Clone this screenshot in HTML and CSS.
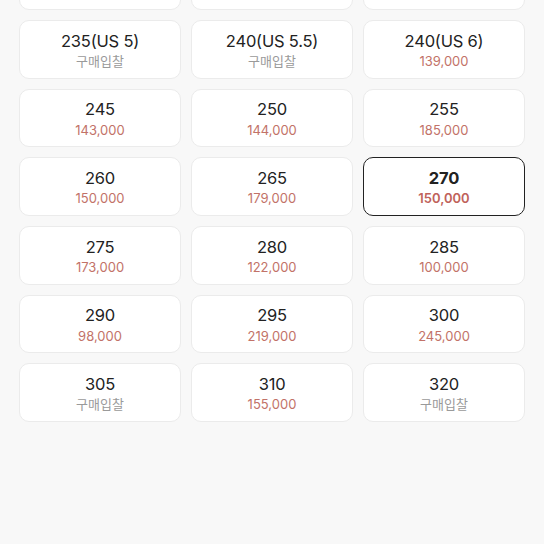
FILE: index.html
```html
<!DOCTYPE html>
<html lang="ko">
<head>
    <meta charset="UTF-8">
    <meta name="viewport" content="width=device-width, initial-scale=1.0">
    <title>사이즈 선택</title>
    <link rel="stylesheet" href="styles.css">
</head>
<body>
    <div class="size-grid">
        <!-- 위로 스크롤된 줄 -->
        <div class="size-card"></div>
        <div class="size-card"></div>
        <div class="size-card"></div>

        <div class="size-card"><div class="size">235(US 5)</div><div class="price empty">구매입찰</div></div>
        <div class="size-card"><div class="size">240(US 5.5)</div><div class="price empty">구매입찰</div></div>
        <div class="size-card"><div class="size">240(US 6)</div><div class="price">139,000</div></div>

        <div class="size-card"><div class="size">245</div><div class="price">143,000</div></div>
        <div class="size-card"><div class="size">250</div><div class="price">144,000</div></div>
        <div class="size-card"><div class="size">255</div><div class="price">185,000</div></div>

        <div class="size-card"><div class="size">260</div><div class="price">150,000</div></div>
        <div class="size-card"><div class="size">265</div><div class="price">179,000</div></div>
        <div class="size-card selected"><div class="size">270</div><div class="price">150,000</div></div>

        <div class="size-card"><div class="size">275</div><div class="price">173,000</div></div>
        <div class="size-card"><div class="size">280</div><div class="price">122,000</div></div>
        <div class="size-card"><div class="size">285</div><div class="price">100,000</div></div>

        <div class="size-card"><div class="size">290</div><div class="price">98,000</div></div>
        <div class="size-card"><div class="size">295</div><div class="price">219,000</div></div>
        <div class="size-card"><div class="size">300</div><div class="price">245,000</div></div>

        <div class="size-card"><div class="size">305</div><div class="price empty">구매입찰</div></div>
        <div class="size-card"><div class="size">310</div><div class="price">155,000</div></div>
        <div class="size-card"><div class="size">320</div><div class="price empty">구매입찰</div></div>
    </div>
</body>
</html>
```

FILE: styles.css
```css
html, body {
    margin: 0;
    height: 100%;
    overflow: hidden;
}
body {
    background-color: #f8f8f8;
    color: #222222;
    font-family: Inter, "Noto Sans CJK KR", sans-serif;
}
.size-grid {
    display: grid;
    grid-template-columns: repeat(3, 1fr);
    column-gap: 10px;
    row-gap: 10px;
    padding: 0 19px;
    margin-top: -48.4px;
}
.size-card {
    background-color: #ffffff;
    border: 1px solid #ebebeb;
    border-radius: 10px;
    height: 58.6px;
    box-sizing: border-box;
    display: flex;
    flex-direction: column;
    align-items: center;
    justify-content: center;
    padding-top: 2px;
}
.size-card .size {
    font-size: 16.5px;
    line-height: 20px;
    letter-spacing: -0.2px;
}
.size-card .price {
    font-size: 13px;
    line-height: 18px;
    color: #c27268;
    margin-top: 1.5px;
}
.size-card .price.empty {
    color: #9a9a9a;
}
.size-card.selected {
    border: 1.5px solid #222222;
}
.size-card.selected .size {
    font-weight: 700;
}
.size-card.selected .price {
    font-weight: 600;
    color: #c0625a;
}
```
